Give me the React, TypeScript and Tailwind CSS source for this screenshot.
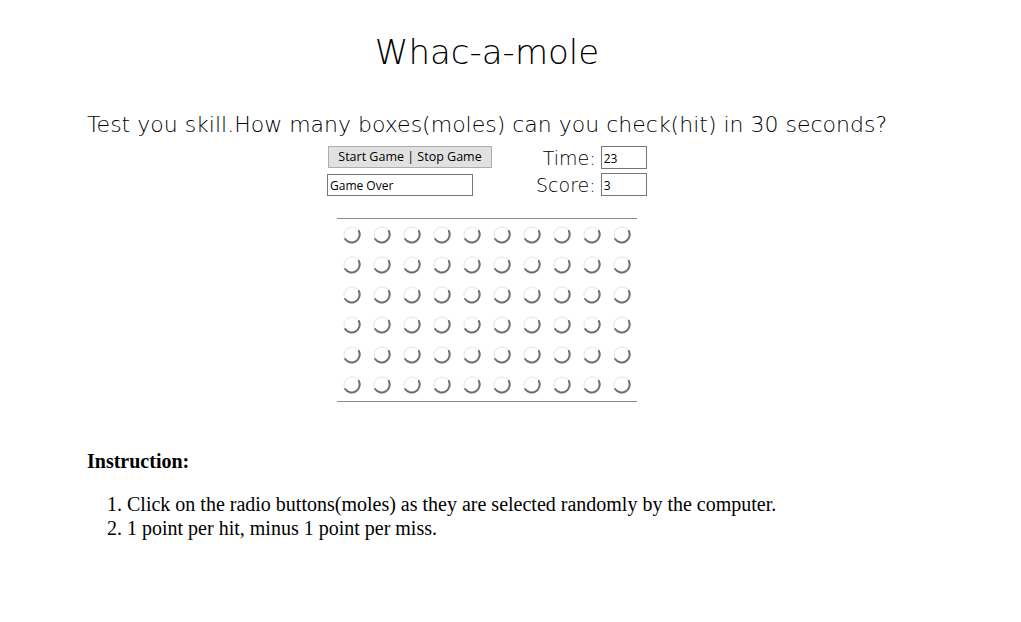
import React from "react";

const ROWS = 6;
const COLS = 10;

function Mole() {
  return (
    <svg width="20" height="20" viewBox="0 0 20 20" className="block">
      <circle cx="10" cy="10" r="8" fill="white" stroke="#ededed" strokeWidth="1.5" />
      <path
        d="M 16.9 6 A 8 8 0 0 1 3.1 14"
        fill="none"
        stroke="#6f6f6f"
        strokeWidth="2"
        strokeLinecap="round"
      />
    </svg>
  );
}

export default function App() {
  const gothic = "font-['DejaVu_Sans',sans-serif]";
  const boxFont = "font-['Open_Sans',sans-serif] font-normal text-black";

  return (
    <div className="min-h-[622px] w-[1021px] bg-white text-black">
      <div className={`w-[974px] text-center ${gothic} font-extralight`}>
        <h1 className="pt-[30px] text-[34px] leading-[44px]">Whac-a-mole</h1>
        <p className="mt-[36px] text-[22px] leading-[30px]">
          Test you skill.How many boxes(moles) can you check(hit) in 30 seconds?
        </p>
      </div>

      <div className="ml-[327px] mt-[6px] flex items-start">
        <div className="flex w-[165px] flex-col gap-[6px]">
          <button className={`ml-[1px] h-[22px] w-[164px] border border-[#adadad] bg-[#e1e1e1] text-[12.5px] leading-[20px] ${boxFont}`}>
            Start Game | Stop Game
          </button>
          <input
            readOnly
            value="Game Over"
            className={`h-[22px] w-[146px] border border-[#767676] px-[2px] text-[12px] outline-none ${boxFont}`}
          />
        </div>
        <div className={`ml-[44px] flex flex-col gap-[4px] ${gothic} font-extralight`}>
          <div className="flex items-center justify-end gap-[5px]">
            <span className="text-[19px] leading-[22px]">Time:</span>
            <input
              readOnly
              value="23"
              className={`h-[23px] w-[46px] border border-[#767676] px-[2px] pt-[2px] text-[12px] outline-none ${boxFont}`}
            />
          </div>
          <div className="flex items-center justify-end gap-[5px]">
            <span className="text-[19px] leading-[22px]">Score:</span>
            <input
              readOnly
              value="3"
              className={`h-[23px] w-[46px] border border-[#767676] px-[2px] pt-[2px] text-[12px] outline-none ${boxFont}`}
            />
          </div>
        </div>
      </div>

      <div className="ml-[337px] mt-[22px] w-[300px] border-y border-[#8a8a8a] py-[1px]">
        <div className="grid grid-cols-10">
          {Array.from({ length: ROWS * COLS }).map((_, i) => (
            <div key={i} className="flex h-[30px] items-center justify-center">
              <Mole />
            </div>
          ))}
        </div>
      </div>

      <div className="ml-[87px] mt-[48px] font-['Liberation_Serif',serif] text-[20px]">
        <h3 className="font-bold leading-[22px]">Instruction:</h3>
        <ol className="mt-[20px] list-decimal pl-[40px] leading-[24px]">
          <li>Click on the radio buttons(moles) as they are selected randomly by the computer.</li>
          <li>1 point per hit, minus 1 point per miss.</li>
        </ol>
      </div>
    </div>
  );
}
